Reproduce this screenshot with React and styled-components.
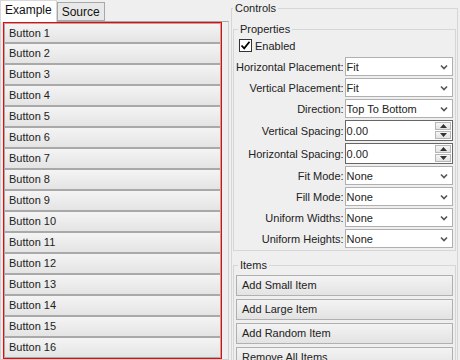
import React from 'react'
import styled, { createGlobalStyle } from 'styled-components'

const GlobalStyle = createGlobalStyle`
  html, body {
    margin: 0;
    padding: 0;
    background: #efefef;
    font-family: "Liberation Sans", Arial, sans-serif;
    font-size: 11px;
    color: #222;
    overflow: hidden;
  }
`

const Page = styled.div`
  display: flex;
  width: 460px;
  height: 360px;
  overflow: hidden;
`

const LeftPane = styled.div`
  width: 229px;
  display: flex;
  flex-direction: column;
`

const TabBar = styled.div`
  display: flex;
  align-items: flex-end;
  height: 21px;
`

const Tab = styled.div`
  box-sizing: border-box;
  height: ${p => (p.$active ? '22px' : '19px')};
  margin-bottom: ${p => (p.$active ? '-1px' : '0')};
  padding: 2px 4px 0 4px;
  background: ${p => (p.$active ? '#fff' : '#e8e8e8')};
  border: 1px solid ${p => (p.$active ? '#d8d8d8' : '#a8a8a8')};
  border-bottom: ${p => (p.$active ? 'none' : '1px solid #a8a8a8')};
  font-size: 12px;
  line-height: 15px;
  color: #111;
  position: relative;
  z-index: ${p => (p.$active ? 1 : 0)};
`

const TabPanel = styled.div`
  flex: 1;
  border: 1px solid #d0d0d0;
  border-top: 1px solid #a8a8a8;
  padding: 0 6px 0 2px;
  display: flex;
  flex-direction: column;
  min-height: 0;
`

const RedBox = styled.div`
  flex: 1;
  border: 1px solid #f00;
  display: flex;
  flex-direction: column;
  overflow: hidden;
`

const ListButton = styled.div`
  box-sizing: border-box;
  flex: none;
  height: 21px;
  border: 1px solid #a9a9a9;
  border-top-width: ${p => (p.$first ? '1px' : '0')};
  border-bottom-width: 2px;
  background: linear-gradient(#f4f4f4, #e4e4e4);
  padding-left: 4px;
  line-height: 18px;
  font-size: 11px;
  color: #222;
`

const RightPane = styled.div`
  flex: 1;
  padding: 2px 2px 0 2px;
`

const Group = styled.fieldset`
  margin: ${p => p.$top || 0}px 0 ${p => p.$gap || 0}px 0;
  padding: ${p => p.$pad || '0 1px'};
  border: 1px solid #d6d6d6;
  min-width: 0;
`

const Legend = styled.legend`
  padding: 0 2px;
  margin-left: ${p => p.$indent || 0}px;
  font-size: 11px;
  line-height: 13px;
  color: #222;
`

const CheckRow = styled.label`
  display: flex;
  align-items: center;
  gap: 3px;
  height: 15px;
  margin: 2px 0 4px 4px;
  font-size: 11px;
`

const CheckBox = styled.span`
  box-sizing: border-box;
  width: 13px;
  height: 13px;
  border: 1px solid #333;
  background: #fff;
  display: flex;
  align-items: center;
  justify-content: center;
`

const FormGrid = styled.div`
  display: grid;
  grid-template-columns: auto 1fr;
  column-gap: 1px;
  row-gap: 2px;
  align-items: center;
  padding: 0 1px 0 1px;
`

const FieldLabel = styled.div`
  text-align: right;
  font-size: 11px;
  white-space: nowrap;
`

const Select = styled.div`
  box-sizing: border-box;
  height: 19px;
  border: 1px solid #b0b0b0;
  background: #fff;
  display: flex;
  align-items: center;
  justify-content: space-between;
  padding: 0 4px 0 1px;
  font-size: 11px;
`

const Spinner = styled.div`
  box-sizing: border-box;
  height: 21px;
  border: 1px solid #666;
  background: #fff;
  display: flex;
  align-items: center;
  justify-content: space-between;
  padding: 0 1px 0 1px;
  font-size: 11px;
`

const SpinButtons = styled.div`
  display: flex;
  flex-direction: column;
  gap: 1px;
`

const SpinButton = styled.div`
  box-sizing: border-box;
  width: 16px;
  height: 8px;
  border: 1px solid #b5b5b5;
  background: linear-gradient(#f6f6f6, #e2e2e2);
  display: flex;
  align-items: center;
  justify-content: center;
`

const ItemButtons = styled.div`
  display: flex;
  flex-direction: column;
  gap: 3px;
  padding: 3px 1px 0 1px;
`

const ItemButton = styled.div`
  box-sizing: border-box;
  height: 21px;
  border: 1px solid #b0b0b0;
  background: linear-gradient(#f3f3f3, #e3e3e3);
  padding-left: 5px;
  line-height: 19px;
  font-size: 11px;
`

const Chevron = () => (
  <svg width="8" height="6" viewBox="0 0 8 6">
    <path d="M1 1.5 L4 4.5 L7 1.5" fill="none" stroke="#555" strokeWidth="1.6" />
  </svg>
)

const Triangle = ({ up }) => (
  <svg width="7" height="4" viewBox="0 0 7 4">
    <path d={up ? 'M0 4 L3.5 0 L7 4 Z' : 'M0 0 L3.5 4 L7 0 Z'} fill="#333" />
  </svg>
)

const fields = [
  { label: 'Horizontal Placement:', value: 'Fit' },
  { label: 'Vertical Placement:', value: 'Fit' },
  { label: 'Direction:', value: 'Top To Bottom' },
  { label: 'Vertical Spacing:', value: '0.00', spin: true },
  { label: 'Horizontal Spacing:', value: '0.00', spin: true },
  { label: 'Fit Mode:', value: 'None' },
  { label: 'Fill Mode:', value: 'None' },
  { label: 'Uniform Widths:', value: 'None' },
  { label: 'Uniform Heights:', value: 'None' },
]

const items = ['Add Small Item', 'Add Large Item', 'Add Random Item', 'Remove All Items']

const App = () => {
  const buttons = Array.from({ length: 16 }, (_, i) => `Button ${i + 1}`)
  return (
    <Page>
      <GlobalStyle />
      <LeftPane>
        <TabBar>
          <Tab $active>Example</Tab>
          <Tab>Source</Tab>
        </TabBar>
        <TabPanel>
          <RedBox>
            {buttons.map((b, i) => (
              <ListButton key={b} $first={i === 0}>{b}</ListButton>
            ))}
          </RedBox>
        </TabPanel>
      </LeftPane>
      <RightPane>
        <Group>
          <Legend>Controls</Legend>
          <Group $top={8} $pad="0 1px 2px 1px" $gap={8}>
            <Legend $indent={3}>Properties</Legend>
            <CheckRow>
              <CheckBox>
                <svg width="11" height="11" viewBox="0 0 11 11">
                  <path d="M1.5 5.5 L4.2 8.3 L9.5 1.8" fill="none" stroke="#000" strokeWidth="1.8" />
                </svg>
              </CheckBox>
              Enabled
            </CheckRow>
            <FormGrid>
              {fields.map(f => (
                <React.Fragment key={f.label}>
                  <FieldLabel>{f.label}</FieldLabel>
                  {f.spin ? (
                    <Spinner>
                      <span>{f.value}</span>
                      <SpinButtons>
                        <SpinButton><Triangle up /></SpinButton>
                        <SpinButton><Triangle /></SpinButton>
                      </SpinButtons>
                    </Spinner>
                  ) : (
                    <Select>
                      <span>{f.value}</span>
                      <Chevron />
                    </Select>
                  )}
                </React.Fragment>
              ))}
            </FormGrid>
          </Group>
          <Group $pad="0 1px 10px 1px">
            <Legend $indent={3}>Items</Legend>
            <ItemButtons>
              {items.map(t => (
                <ItemButton key={t}>{t}</ItemButton>
              ))}
            </ItemButtons>
          </Group>
        </Group>
      </RightPane>
    </Page>
  )
}

export default App
